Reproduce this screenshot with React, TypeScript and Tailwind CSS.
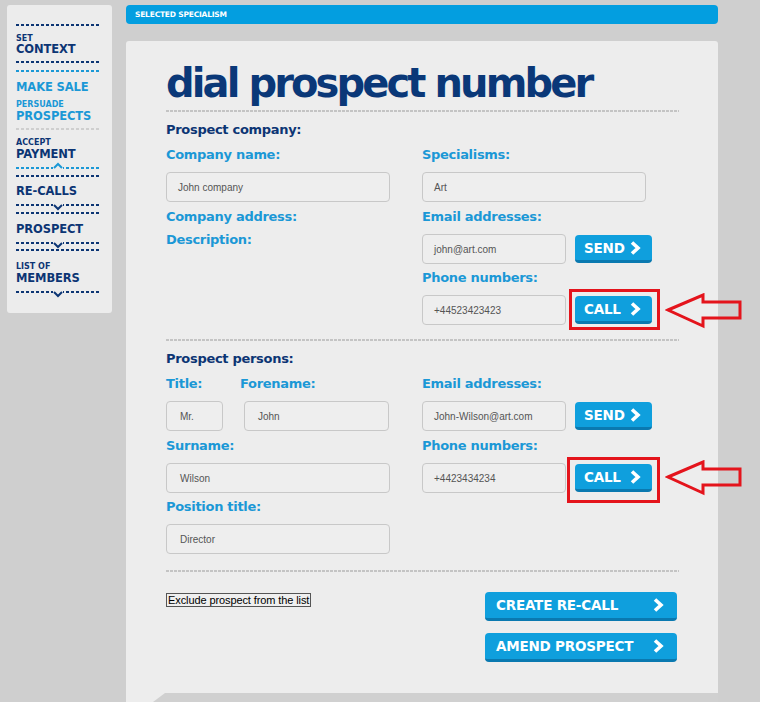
import React from "react";

const HEAD = "font-['DejaVu_Sans',sans-serif]";
const NAVY = "text-[#0c3574]";
const BLUE = "text-[#1b98d6]";

const Chevron = () => (
  <svg width="11" height="14" viewBox="0 0 11 14">
    <polyline points="2,1.5 8,7 2,12.5" fill="none" stroke="white" strokeWidth="3.6" strokeLinejoin="miter" />
  </svg>
);

const BlueButton = ({ label, className = "" }: { label: string; className?: string }) => (
  <div
    className={`flex items-center justify-between h-[28px] rounded-[4px] bg-[#0f9fdd] border-b-[3px] border-[#0a79b0] text-white font-bold text-[13.5px] tracking-[-0.2px] leading-none ${HEAD} ${className}`}
  >
    <span className="pt-[2px]">{label}</span>
    <Chevron />
  </div>
);

const Label = ({ children, className = "" }: { children: React.ReactNode; className?: string }) => (
  <div className={`h-[16px] leading-[16px] text-[13px] font-bold tracking-[-0.3px] ${BLUE} ${HEAD} ${className}`}>{children}</div>
);

const Input = ({ children, className = "" }: { children: React.ReactNode; className?: string }) => (
  <div
    className={`h-[30px] rounded-[4px] border border-[#c8c8c8] bg-[#eeeeee] flex items-center text-[10px] text-[#555555] font-['Liberation_Sans',Arial,sans-serif] ${className}`}
  >
    {children}
  </div>
);

const MainDash = ({ className = "" }: { className?: string }) => (
  <div className={`h-[2px] bg-[image:repeating-linear-gradient(90deg,#c4c4c4_0_3px,transparent_3px_4px)] ${className}`} />
);

const Arrow = () => (
  <svg width="80" height="36" viewBox="0 0 80 36">
    <polygon points="3,17 38,2 38,9 75,9 75,25 38,25 38,33" fill="none" stroke="#e4141c" strokeWidth="3" strokeLinejoin="miter" />
  </svg>
);

const CallWithBox = ({ box }: { box: string }) => (
  <div className="relative ml-[9px] mt-[1px] w-[77px]">
    <BlueButton label="CALL" className="pl-[9px] pr-[11px]" />
    <div className={`absolute border-[3px] border-[#e4141c] ${box}`} />
  </div>
);

const SideDash = ({ color = "#0c3574", className = "" }: { color?: string; className?: string }) => (
  <div
    className={`h-[2px] w-[84px] ${className}`}
    style={{ backgroundImage: `repeating-linear-gradient(90deg, ${color} 0 3px, transparent 3px 5px)` }}
  />
);

const SideChevDash = ({ up, color, className = "" }: { up?: boolean; color: string; className?: string }) => (
  <div className={`relative ${className}`}>
    <SideDash color={color} />
    <div className={`absolute left-[37px] w-[10px] h-[7px] bg-[#ececec] ${up ? "bottom-0" : "top-0"}`}>
      <svg width="10" height="7" viewBox="0 0 10 7">
        {up ? (
          <polyline points="1,6 5,2 9,6" fill="none" stroke={color} strokeWidth="2" />
        ) : (
          <polyline points="1,1 5,5 9,1" fill="none" stroke={color} strokeWidth="2" />
        )}
      </svg>
    </div>
  </div>
);

const Small = ({ children, className = "" }: { children: React.ReactNode; className?: string }) => (
  <div className={`h-[8px] leading-[8px] text-[8px] font-bold ${HEAD} ${className}`}>{children}</div>
);
const Big = ({ children, className = "" }: { children: React.ReactNode; className?: string }) => (
  <div className={`h-[11px] leading-[11px] text-[11.5px] font-bold tracking-[-0.1px] ${HEAD} ${className}`}>{children}</div>
);

export default function App() {
  return (
    <div className="w-[760px] h-[702px] bg-[#cfcfcf] flex items-start overflow-hidden">
      {/* Sidebar */}
      <div className="ml-[7px] mt-[5px] w-[105px] h-[308px] bg-[#ececec] rounded-[3px] pl-[9px] flex flex-col">
        <SideDash className="mt-[19px]" />
        <Small className={`mt-[9px] ${NAVY}`}>SET</Small>
        <Big className={`mt-[1px] ${NAVY}`}>CONTEXT</Big>
        <SideDash className="mt-[6px]" />
        <SideDash color="#1b98d6" className="mt-[7px]" />
        <Big className={`mt-[10px] ${BLUE}`}>MAKE SALE</Big>
        <Small className={`mt-[8px] ${BLUE}`}>PERSUADE</Small>
        <Big className={`mt-[2px] ${BLUE}`}>PROSPECTS</Big>
        <SideDash color="#cfcfcf" className="mt-[6px]" />
        <Small className={`mt-[9px] ${NAVY}`}>ACCEPT</Small>
        <Big className={`mt-[2px] ${NAVY}`}>PAYMENT</Big>
        <SideChevDash up color="#1b98d6" className="mt-[7px]" />
        <SideDash className="mt-[6px]" />
        <Big className={`mt-[9px] ${NAVY}`}>RE-CALLS</Big>
        <SideChevDash color="#0c3574" className="mt-[7px]" />
        <SideDash className="mt-[6px]" />
        <Big className={`mt-[10px] ${NAVY}`}>PROSPECT</Big>
        <SideChevDash color="#0c3574" className="mt-[7px]" />
        <SideDash className="mt-[5px]" />
        <Small className={`mt-[12px] ${NAVY}`}>LIST OF</Small>
        <Big className={`mt-[2px] ${NAVY}`}>MEMBERS</Big>
        <SideChevDash color="#0c3574" className="mt-[7px]" />
      </div>

      {/* Right column */}
      <div className="ml-[14px] mt-[5px] w-[592px] flex flex-col">
        <div className={`h-[19px] bg-[#039ee0] rounded-[4px] pl-[9px] flex items-center text-white text-[7.5px] font-bold tracking-[-0.2px] ${HEAD}`}>
          SELECTED SPECIALISM
        </div>

        <div className="relative mt-[17px] h-[661px] bg-[#ededed] rounded-t-[3px] pl-[40px] pr-[39px] pt-[22px]">
          <h1 className={`text-[40px] leading-[40px] font-bold tracking-[-2.9px] text-[#0a3878] ${HEAD}`}>dial prospect number</h1>
          <MainDash className="mt-[7px]" />

          {/* Prospect company */}
          <div className={`mt-[10px] h-[16px] leading-[16px] text-[13px] font-bold tracking-[-0.3px] ${NAVY} ${HEAD}`}>Prospect company:</div>
          <div className="flex mt-[9px]">
            <div className="w-[256px]">
              <Label>Company name:</Label>
              <Input className="mt-[9px] w-[224px] pl-[11px]">John company</Input>
              <Label className="mt-[7px]">Company address:</Label>
              <Label className="mt-[7px]">Description:</Label>
            </div>
            <div className="flex-1">
              <Label>Specialisms:</Label>
              <Input className="mt-[9px] w-[224px] pl-[11px]">Art</Input>
              <Label className="mt-[7px]">Email addresses:</Label>
              <div className="flex items-start mt-[9px]">
                <Input className="w-[144px] pl-[11px]">john@art.com</Input>
                <BlueButton label="SEND" className="ml-[9px] mt-[1px] w-[77px] pl-[9px] pr-[11px]" />
              </div>
              <Label className="mt-[6px]">Phone numbers:</Label>
              <div className="flex items-start mt-[9px]">
                <Input className="w-[144px] pl-[11px]">+44523423423</Input>
                <div className="relative">
                  <CallWithBox box="left-[-6px] top-[-7px] w-[91px] h-[41px]" />
                  <div className="absolute left-[99px] top-[-2px]">
                    <Arrow />
                  </div>
                </div>
              </div>
            </div>
          </div>
          <MainDash className="mt-[14px]" />

          {/* Prospect persons */}
          <div className={`mt-[10px] h-[16px] leading-[16px] text-[13px] font-bold tracking-[-0.3px] ${NAVY} ${HEAD}`}>Prospect persons:</div>
          <div className="flex mt-[9px]">
            <div className="w-[256px]">
              <div className="flex">
                <Label className="w-[74px]">Title:</Label>
                <Label>Forename:</Label>
              </div>
              <div className="flex mt-[9px]">
                <Input className="w-[57px] pl-[13px]">Mr.</Input>
                <Input className="ml-[21px] w-[145px] pl-[13px]">John</Input>
              </div>
              <Label className="mt-[7px]">Surname:</Label>
              <Input className="mt-[9px] w-[224px] pl-[13px]">Wilson</Input>
              <Label className="mt-[6px]">Position title:</Label>
              <Input className="mt-[9px] w-[224px] pl-[13px]">Director</Input>
            </div>
            <div className="flex-1">
              <Label>Email addresses:</Label>
              <div className="flex items-start mt-[9px]">
                <Input className="w-[144px] pl-[11px]">John-Wilson@art.com</Input>
                <BlueButton label="SEND" className="ml-[9px] mt-[1px] w-[77px] pl-[9px] pr-[11px]" />
              </div>
              <Label className="mt-[7px]">Phone numbers:</Label>
              <div className="flex items-start mt-[9px]">
                <Input className="w-[144px] pl-[11px]">+4423434234</Input>
                <div className="relative">
                  <CallWithBox box="left-[-8px] top-[-7px] w-[93px] h-[46px]" />
                  <div className="absolute left-[99px] top-[-3px]">
                    <Arrow />
                  </div>
                </div>
              </div>
            </div>
          </div>
          <MainDash className="mt-[16px]" />

          <div className="flex justify-between items-start mt-[20px]">
            <div className="mt-[1px] h-[14px] px-[1px] border border-[#555555] bg-[#efefef] flex items-center text-[11px] leading-none text-black font-['Liberation_Sans',Arial,sans-serif] tracking-[-0.1px]">
              Exclude prospect from the list
            </div>
            <div className="flex flex-col gap-[12px] w-[192px] mr-[2px]">
              <BlueButton label="CREATE RE-CALL" className="h-[29px] pl-[11px] pr-[13px]" />
              <BlueButton label="AMEND PROSPECT" className="h-[29px] pl-[11px] pr-[13px]" />
            </div>
          </div>

          <div className="absolute bottom-0 left-[27px] right-0 h-[9px] bg-[#d0d0d0] [clip-path:polygon(0_100%,12px_0,100%_0,100%_100%)]" />
        </div>
      </div>
    </div>
  );
}
